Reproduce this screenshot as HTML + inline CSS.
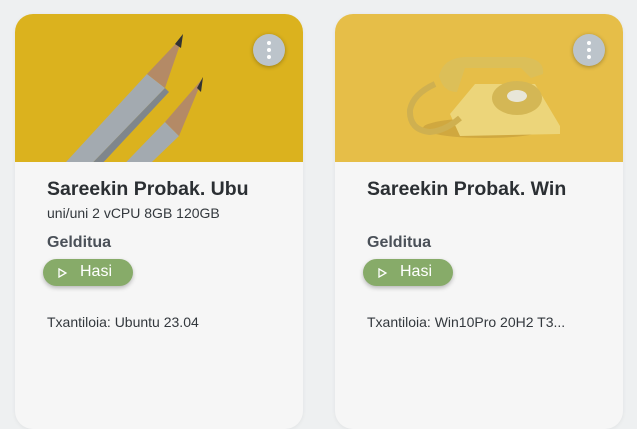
<!DOCTYPE html>
<html><head><style>
*{margin:0;padding:0;box-sizing:border-box}
body{width:637px;height:429px;background:#eef0f1;font-family:"Liberation Sans",sans-serif;position:relative;overflow:hidden}
.card{position:absolute;top:14px;width:288px;height:415px;background:#f6f6f6;border-radius:18px;overflow:hidden;box-shadow:0 1px 4px rgba(0,0,0,0.06)}
.img{position:absolute;left:0;top:0;width:288px;height:148px}
.dots{position:absolute;right:18px;top:20px;width:32px;height:32px;border-radius:50%;background:#bcc4cb;box-shadow:0 1px 4px rgba(0,0,0,.3)}
.dots i{position:absolute;left:14px;width:4px;height:4px;border-radius:50%;background:#fff}
.t{position:absolute;left:32px;top:164px;font-size:19.5px;font-weight:bold;color:#2b2f33}
.s{position:absolute;left:32px;top:191px;font-size:14px;color:#33383d}
.g{position:absolute;left:32px;top:220px;font-size:16px;font-weight:bold;color:#4a5058}
.b{position:absolute;left:28px;top:245px;width:90px;height:27px;border-radius:14px;background:#87ab69;color:#fff;font-size:16px;box-shadow:0 2px 4px rgba(0,0,0,.25)}
.b svg{position:absolute;left:15px;top:9px}
.b span{position:absolute;left:37px;top:4px}
.x{position:absolute;left:32px;top:300px;font-size:14px;color:#33383d}
</style></head><body>
<div class="card" style="left:15px">
<svg class="img" viewBox="0 0 288 148">
<rect width="288" height="148" fill="#dbb21e"/>
<polygon points="40,160 132,60 150,74 62,165" fill="#a3aab0"/>
<polygon points="62,165 150,74 154,78 70,168" fill="#7f868c"/>
<polygon points="132,60 150,74 168,22" fill="#b48a66"/>
<polygon points="160,30 168,20 166,34" fill="#333"/>
<polygon points="90,170 150,108 164,122 112,172" fill="#a3aab0"/>
<polygon points="150,108 164,122 188,64" fill="#b48a66"/>
<polygon points="182,74 188,63 186,78" fill="#333"/>
</svg>
<div class="dots"><i style="top:7px"></i><i style="top:14px"></i><i style="top:21px"></i></div>
<div class="t">Sareekin Probak. Ubu</div>
<div class="s">uni/uni 2 vCPU 8GB 120GB</div>
<div class="g">Gelditua</div>
<div class="b"><svg width="9" height="10"><polygon points="1,1 8,5 1,9" fill="none" stroke="#fff" stroke-width="1.3"/></svg><span>Hasi</span></div>
<div class="x">Txantiloia: Ubuntu 23.04</div>
</div>
<div class="card" style="left:335px">
<svg class="img" viewBox="0 0 288 148">
<rect width="288" height="148" fill="#e6be48"/>
<ellipse cx="150" cy="114" rx="62" ry="10" fill="#b99236" opacity=".5"/>
<path d="M115 100 L140 70 L200 70 L225 112 L225 120 L125 122 Z" fill="#ecd57a"/>
<ellipse cx="182" cy="84" rx="25" ry="17" fill="#d4b755"/>
<ellipse cx="182" cy="82" rx="10" ry="6" fill="#e8e6d8"/>
<path d="M104 62 Q108 44 130 43 L190 43 Q210 46 208 60 L196 64 L186 54 L130 54 L122 78 Q108 78 104 62 Z" fill="#dcbf58"/>
<path d="M100 70 Q78 80 75 96 Q74 116 95 118 Q110 117 125 104" fill="none" stroke="#cfb050" stroke-width="6"/>
</svg>
<div class="dots"><i style="top:7px"></i><i style="top:14px"></i><i style="top:21px"></i></div>
<div class="t">Sareekin Probak. Win</div>
<div class="g">Gelditua</div>
<div class="b"><svg width="9" height="10"><polygon points="1,1 8,5 1,9" fill="none" stroke="#fff" stroke-width="1.3"/></svg><span>Hasi</span></div>
<div class="x">Txantiloia: Win10Pro 20H2 T3...</div>
</div>
</body></html>
